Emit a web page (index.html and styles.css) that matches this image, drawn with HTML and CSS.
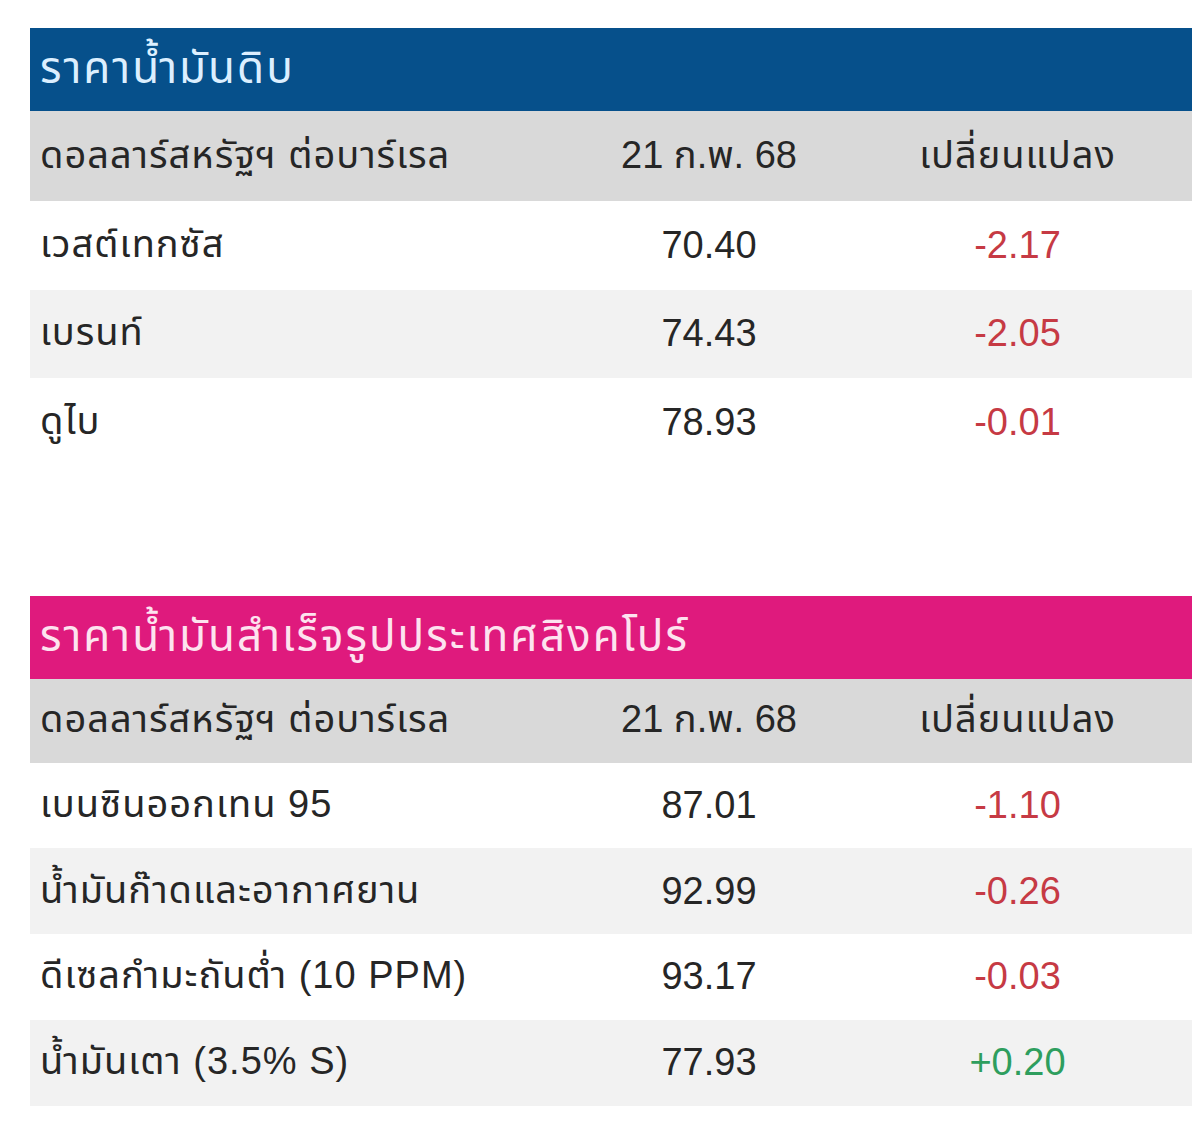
FILE: index.html
```html
<!DOCTYPE html>
<html lang="th">
<head>
<meta charset="utf-8">
<link rel="stylesheet" href="styles.css">
</head>
<body>
<div class="page">
  <section class="tbl tbl-crude">
    <div class="title title-blue">ราคาน้ำมันดิบ</div>
    <div class="row head">
      <div class="c1">ดอลลาร์สหรัฐฯ ต่อบาร์เรล</div>
      <div class="c2">21 ก.พ. 68</div>
      <div class="c3 thai">เปลี่ยนแปลง</div>
    </div>
    <div class="row">
      <div class="c1">เวสต์เทกซัส</div>
      <div class="c2">70.40</div>
      <div class="c3 neg">-2.17</div>
    </div>
    <div class="row alt">
      <div class="c1">เบรนท์</div>
      <div class="c2">74.43</div>
      <div class="c3 neg">-2.05</div>
    </div>
    <div class="row">
      <div class="c1">ดูไบ</div>
      <div class="c2">78.93</div>
      <div class="c3 neg">-0.01</div>
    </div>
  </section>

  <section class="tbl tbl-refined">
    <div class="title title-pink">ราคาน้ำมันสำเร็จรูปประเทศสิงคโปร์</div>
    <div class="row head">
      <div class="c1">ดอลลาร์สหรัฐฯ ต่อบาร์เรล</div>
      <div class="c2">21 ก.พ. 68</div>
      <div class="c3 thai">เปลี่ยนแปลง</div>
    </div>
    <div class="row">
      <div class="c1">เบนซินออกเทน 95</div>
      <div class="c2">87.01</div>
      <div class="c3 neg">-1.10</div>
    </div>
    <div class="row alt">
      <div class="c1">น้ำมันก๊าดและอากาศยาน</div>
      <div class="c2">92.99</div>
      <div class="c3 neg">-0.26</div>
    </div>
    <div class="row">
      <div class="c1">ดีเซลกำมะถันต่ำ (10 PPM)</div>
      <div class="c2">93.17</div>
      <div class="c3 neg">-0.03</div>
    </div>
    <div class="row alt">
      <div class="c1">น้ำมันเตา (3.5% S)</div>
      <div class="c2">77.93</div>
      <div class="c3 pos">+0.20</div>
    </div>
  </section>
</div>
</body>
</html>
```

FILE: styles.css
```css
html, body {
  margin: 0;
  padding: 0;
  background: #ffffff;
}

body {
  font-family: "Liberation Sans", "Noto Sans Thai", "Noto Sans", Tahoma, sans-serif;
  color: #262626;
  font-size: 38px;
}

.page {
  padding: 28px 8px 0 30px;
  display: flex;
  flex-direction: column;
  gap: 129px;
}

.tbl {
  width: 1162px;
  display: flex;
  flex-direction: column;
}

.title {
  height: 83px;
  display: flex;
  align-items: center;
  padding-left: 10px;
  font-size: 44px;
  letter-spacing: 2px;
  box-sizing: border-box;
  white-space: nowrap;
}

.title-blue {
  background: #06508b;
  color: #dcefff;
}

.title-pink {
  background: #df1a7d;
  color: #fde3ef;
}

.row {
  display: grid;
  grid-template-columns: 545px 268px 349px;
  align-items: center;
  background: #ffffff;
}

.tbl-crude .row { height: 88.5px; }
.tbl-crude .row.head { height: 90px; }
.tbl-refined .row { height: 85.75px; }
.tbl-refined .row.head { height: 84px; }

.row.head {
  background: #d9d9d9;
}

.row.alt {
  background: #f2f2f2;
}

.c1 {
  padding-left: 10px;
  white-space: nowrap;
  letter-spacing: 1px;
}

.c2, .c3 {
  text-align: center;
}

.c3.thai {
  letter-spacing: 1px;
}

.neg { color: #c63a44; }
.pos { color: #2e9e5e; }
```
